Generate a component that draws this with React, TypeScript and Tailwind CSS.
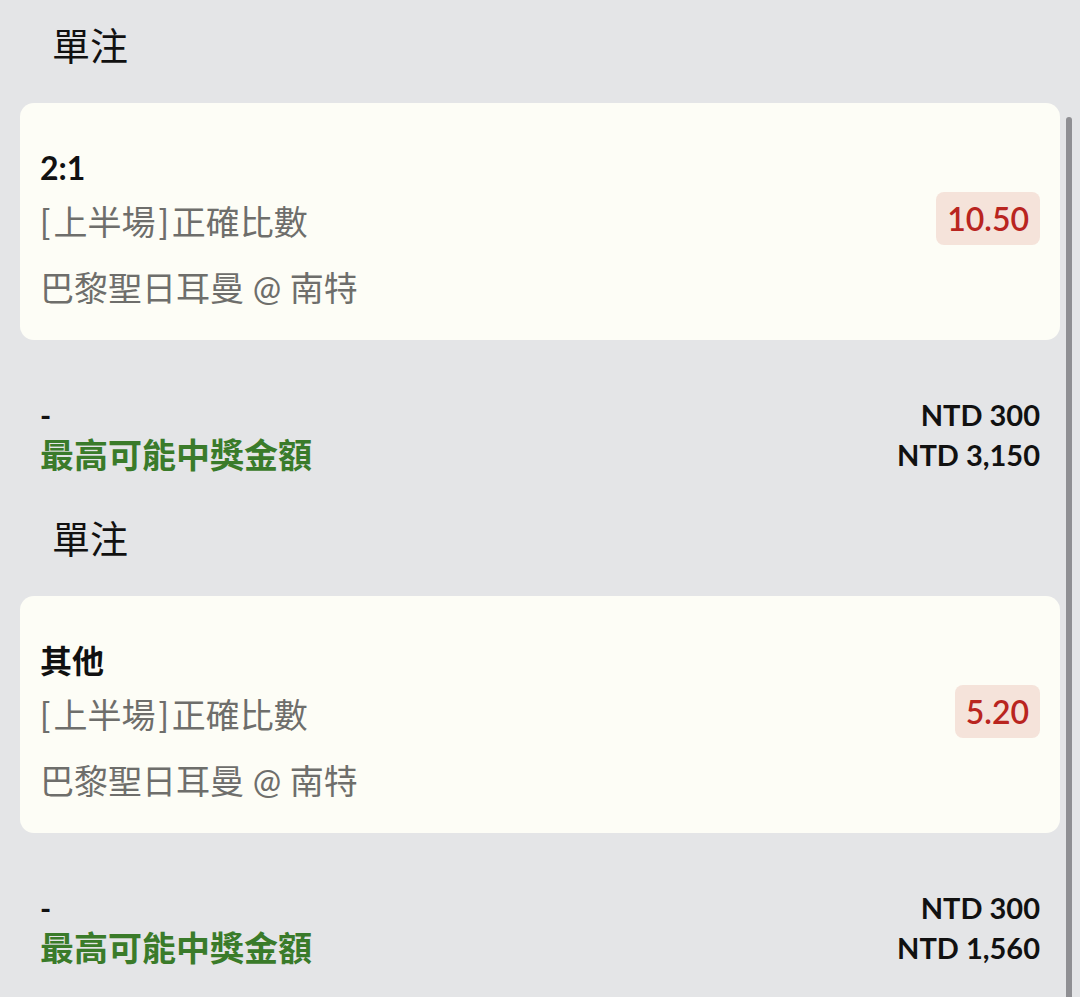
const font = "font-['Lato','Noto_Sans_CJK_TC',sans-serif]";

type Bet = {
  pick: string;
  market: string;
  match: string;
  odds: string;
  stake: string;
  payout: string;
};

const bets: Bet[] = [
  { pick: "2:1", market: "上半場]正確比數", match: "巴黎聖日耳曼 @ 南特", odds: "10.50", stake: "NTD 300", payout: "NTD 3,150" },
  { pick: "其他", market: "上半場]正確比數", match: "巴黎聖日耳曼 @ 南特", odds: "5.20", stake: "NTD 300", payout: "NTD 1,560" },
];

function BetSection({ bet }: { bet: Bet }) {
  const [half, rest] = bet.market.split("]");
  return (
    <section className="px-[20px]">
      <h2 className="mb-[33px] pl-[32px] pt-[20px] text-[38px] font-normal leading-[50px] text-[#111]">
        單注
      </h2>

      <div className="flex h-[237px] justify-between rounded-[14px] bg-[#fdfdf6] px-[20px]">
        <div className="pt-[45px]">
          <p className="text-[32px] font-bold leading-[40px] text-[#111]">{bet.pick}</p>
          <p className="mt-[6px] text-[34px] leading-[56px] text-[#6e6e6b]">
            <span className="mr-[3px]">[</span>
            {half}
            <span className="mx-[3px]">]</span>
            {rest}
          </p>
          <p className="mt-[10px] text-[34px] leading-[56px] text-[#6e6e6b]">{bet.match}</p>
        </div>
        <div className="flex items-center pb-[6px]">
          <span className="rounded-[8px] bg-[#f5e3da] px-[11px] text-[32px] font-semibold leading-[53px] text-[#b9251f]">
            {bet.odds}
          </span>
        </div>
      </div>

      <div className="mt-[55px] flex justify-between px-[20px] pb-[18px]">
        <div>
          <p className="text-[30px] font-bold leading-[40px] text-[#111]">-</p>
          <p className="text-[34px] font-bold leading-[40px] text-[#3a7b2a]">最高可能中獎金額</p>
        </div>
        <div className="text-right text-[29px] font-bold leading-[40px] text-[#111]">
          <p>{bet.stake}</p>
          <p>{bet.payout}</p>
        </div>
      </div>
    </section>
  );
}

export default function App() {
  return (
    <main className={`relative h-[997px] w-[1080px] overflow-hidden bg-[#e4e5e7] ${font}`}>
      {bets.map((bet, i) => (
        <BetSection key={i} bet={bet} />
      ))}
      <div className="absolute right-[8px] top-[117px] h-[900px] w-[6px] rounded-full bg-[#8f8f93]" />
    </main>
  );
}
